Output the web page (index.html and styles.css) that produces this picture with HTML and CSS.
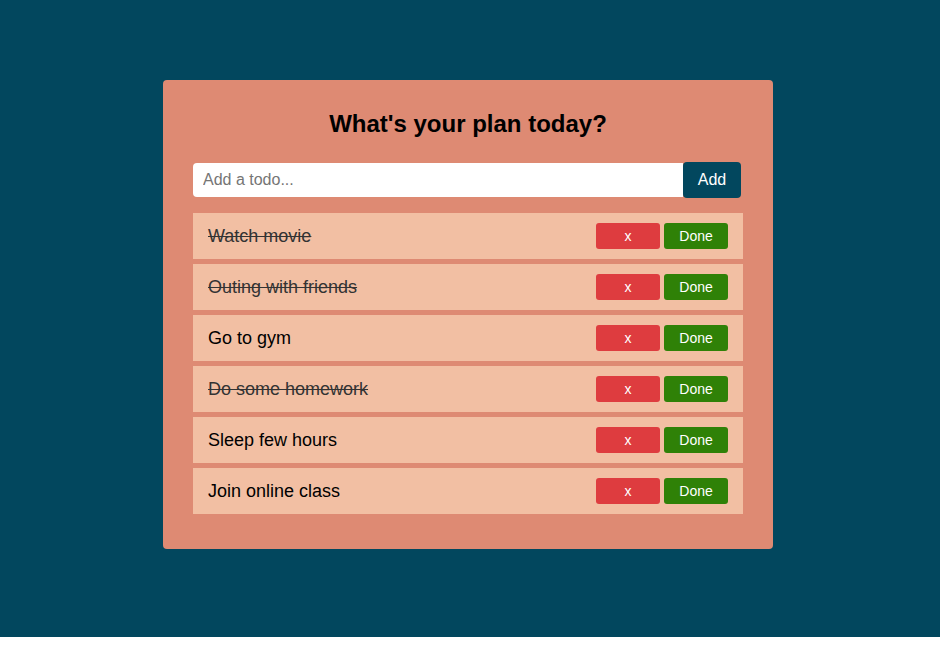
FILE: index.html
```html
<!DOCTYPE html>
<html>
<head>
<meta charset="utf-8">
<link rel="stylesheet" href="styles.css">
</head>
<body>
<div class="app">
  <div class="card">
    <h1 class="title">What's your plan today?</h1>
    <form class="add-form">
      <input class="add-input" type="text" placeholder="Add a todo...">
      <button class="add-btn" type="button">Add</button>
    </form>
    <ul class="list">
      <li class="item done"><span class="text">Watch movie</span><span class="actions"><button class="btn del">x</button><button class="btn ok">Done</button></span></li>
      <li class="item done"><span class="text">Outing with friends</span><span class="actions"><button class="btn del">x</button><button class="btn ok">Done</button></span></li>
      <li class="item"><span class="text">Go to gym</span><span class="actions"><button class="btn del">x</button><button class="btn ok">Done</button></span></li>
      <li class="item done"><span class="text">Do some homework</span><span class="actions"><button class="btn del">x</button><button class="btn ok">Done</button></span></li>
      <li class="item"><span class="text">Sleep few hours</span><span class="actions"><button class="btn del">x</button><button class="btn ok">Done</button></span></li>
      <li class="item"><span class="text">Join online class</span><span class="actions"><button class="btn del">x</button><button class="btn ok">Done</button></span></li>
    </ul>
  </div>
</div>
</body>
</html>
```

FILE: styles.css
```css
* { box-sizing: border-box; }
html, body { margin: 0; padding: 0; background: #fff; }
body { font-family: "Liberation Sans", Arial, sans-serif; }

.app {
  background: #02475e;
  height: 637px;
  padding: 80px 0 0 163px;
}

.card {
  width: 610px;
  background: #de8a73;
  border-radius: 4px;
  padding: 30px 30px 35px;
}

.title {
  margin: 0 0 24px;
  text-align: center;
  font-size: 24px;
  line-height: 28px;
  font-weight: bold;
  color: #000;
}

.add-form {
  display: flex;
  align-items: center;
  margin: 0 0 15px;
}

.add-input {
  width: 490px;
  height: 34px;
  border: none;
  border-radius: 4px 0 0 4px;
  padding: 0 10px;
  font-family: inherit;
  font-size: 16px;
  color: #000;
  background: #fff;
  outline: none;
}
.add-input::placeholder { color: #757575; }

.add-btn {
  width: 58px;
  height: 36px;
  border: none;
  border-radius: 4px;
  background: #02475e;
  color: #fff;
  font-family: inherit;
  font-size: 16px;
  padding: 0;
}

.list {
  list-style: none;
  margin: 0;
  padding: 0;
  width: 550px;
  display: flex;
  flex-direction: column;
  gap: 5px;
}

.item {
  height: 46px;
  background: #f2bfa3;
  display: flex;
  align-items: center;
  justify-content: space-between;
  padding: 0 15px;
  font-size: 18px;
  color: #000;
}

.item.done .text {
  text-decoration: line-through;
  color: #333;
}

.actions { display: flex; gap: 4px; }

.btn {
  width: 64px;
  height: 26px;
  border: none;
  border-radius: 3px;
  color: #fff;
  font-family: inherit;
  font-size: 14px;
  padding: 0;
}
.btn.del { background: #de3c3f; }
.btn.ok { background: #2f8107; }
```
